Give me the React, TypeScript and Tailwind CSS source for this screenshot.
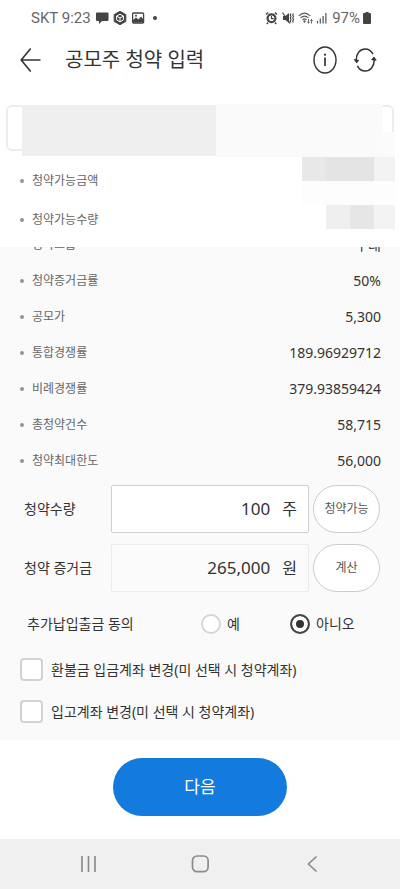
import { useState } from 'react';

type Item = { label: string; value?: string };

const availableItems: Item[] = [{ label: '청약가능금액' }, { label: '청약가능수량' }];

const offerItems: Item[] = [
  { label: '청약그룹', value: '우대' },
  { label: '청약증거금률', value: '50%' },
  { label: '공모가', value: '5,300' },
  { label: '통합경쟁률', value: '189.96929712' },
  { label: '비례경쟁률', value: '379.93859424' },
  { label: '총청약건수', value: '58,715' },
  { label: '청약최대한도', value: '56,000' },
];

function StatusBar() {
  return (
    <div className="flex h-9 items-center justify-between pr-7 pl-[31px] font-['Roboto',sans-serif] text-[15px] text-[#666]">
      <div className="flex items-center gap-1">
        <span>SKT 9:23</span>
        <svg width="14" height="14" viewBox="0 0 14 14" fill="#444">
          <path d="M2 1.5h10.500q1 0 1 1v6.500q0 1-1 1H7L4 13V10H2q-1 0-1-1V2.500q0-1 1-1z" />
        </svg>
        <svg width="14" height="14" viewBox="0 0 14 14">
          <path d="M7 .3 12.800 3.600v6.800L7 13.700 1.200 10.400V3.600z" fill="#444" stroke="#444" strokeLinejoin="round" />
          <path d="M7 3.200 10.400 5.100v3.800L7 10.800 3.600 8.900V5.100zM3.600 5.100 7 7l3.400-1.900M7 7v3.800" fill="none" stroke="#fff" strokeWidth="1" />
        </svg>
        <svg width="14" height="14" viewBox="0 0 14 14">
          <rect x="1.600" y="2" width="11" height="10" rx="1" fill="none" stroke="#444" strokeWidth="1.300" />
          <path d="M2 11.500V9l3-2.500 2.500 2 2.500-3 2.500 3v3z" fill="#444" />
          <circle cx="5" cy="4.800" r="1" fill="#444" />
        </svg>
        <span className="ml-1 size-1 rounded-full bg-[#444]" />
      </div>
      <div className="flex items-center gap-[3px]">
        <svg width="13" height="14" viewBox="0 0 13 14" fill="none" stroke="#444">
          <circle cx="6.500" cy="7.300" r="3.900" strokeWidth="2.200" />
          <path d="M6.500 5v2.600h2.200" strokeWidth="1.200" />
          <path d="M1 3.500 3.200 1.500M12 3.500 9.800 1.500M3 11.500 1.800 13M10 11.500 11.200 13" strokeWidth="1.500" />
        </svg>
        <svg width="14" height="14" viewBox="0 0 14 14" fill="none" stroke="#444">
          <path d="M2 5h2.500L8 2v10L4.500 9H2z" fill="#444" stroke="none" />
          <path d="M1.500 1.500 9 12.500" strokeWidth="1.200" />
          <path d="M10 2.500l-.8 1.500.8 1.500-.8 1.500.8 1.500-.8 1.500.8 1.500M12.500 2.500l-.8 1.500.8 1.500-.8 1.500.8 1.500-.8 1.500.8 1.500" strokeWidth="1.100" />
        </svg>
        <svg width="15" height="14" viewBox="0 0 15 14" fill="none" stroke="#555" strokeWidth="1.100">
          <path d="M.8 4.800Q6.500-.6 12.200 4.800M2.600 6.900Q6.500 3.200 10.400 6.900M4.500 8.900Q6.500 7 8.500 8.900" />
          <circle cx="6.500" cy="10.500" r=".6" fill="#555" />
          <path d="M10.500 8v4M9.300 11l1.200 1.200L11.700 11M13.500 12.500v-4M12.300 9.700l1.200-1.200 1.200 1.200" strokeWidth=".9" />
        </svg>
        <svg width="13" height="14" viewBox="0 0 13 14" stroke="#555" strokeWidth="1.200">
          <path d="M1.500 12.500v-2.500M4.300 12.500V7.500M7.100 12.500V5M9.900 12.500V2" />
        </svg>
        <div className="flex items-center gap-[2px]">
          <span>97%</span>
          <svg width="10" height="14" viewBox="0 0 10 14" fill="#444">
            <path d="M3.500 1h3v1H8q1 0 1 1v9q0 1-1 1H2q-1 0-1-1V3q0-1 1-1h1.500z" />
          </svg>
        </div>
      </div>
    </div>
  );
}

function Header() {
  return (
    <header className="flex h-12 items-center pr-[23px] pl-5">
      <button type="button" aria-label="뒤로">
        <svg width="21" height="26" viewBox="0 0 21 26" fill="none" stroke="#333" strokeWidth="1.600">
          <path d="M10.700 1.600 1.200 13l9.500 11.400M1.200 13H20.500" />
        </svg>
      </button>
      <h1 className="ml-6 flex-1 text-xl text-[#333]">공모주 청약 입력</h1>
      <div className="flex items-center gap-4">
        <button type="button" aria-label="안내">
          <svg width="24" height="28" viewBox="0 0 24 28" fill="none" stroke="#333" strokeWidth="1.400">
            <ellipse cx="12" cy="14" rx="11" ry="13" />
            <path d="M12 11.500v8.500" strokeWidth="1.700" />
            <circle cx="12" cy="8.700" r="1.100" fill="#333" stroke="none" />
          </svg>
        </button>
        <button type="button" aria-label="새로고침">
          <svg width="24" height="28" viewBox="0 0 24 28" fill="none" stroke="#333" strokeWidth="1.500">
            <path d="M3.200 14C3.200 7.500 7.200 3 12.200 3c3.300 0 6.200 2 7.800 5.200M21.200 14c0 6.500-4 11-9 11-3.400 0-6.200-2-7.800-5.200" />
            <path d="M1.200 13.500 5.600 14.300 3.800 17zM18.600 13.700 23.200 14.300 21 11z" fill="#333" strokeWidth=".8" />
          </svg>
        </button>
      </div>
    </header>
  );
}

// Hides the account number and the available amounts
function PrivacyMask() {
  return (
    <div aria-hidden="true" className="absolute top-5 right-[5px] left-[22px] flex flex-col">
      <div className="flex h-[53px]">
        <div className="mt-px mb-px w-[194px] bg-[#efefef]" />
        <div className="flex-1 bg-[#fafafa]" />
        <div className="mt-7 w-3 bg-[#fbfbfb]" />
      </div>
      <div className="flex h-6 justify-end">
        <div className="w-6 bg-[#e8e8e8]" />
        <div className="w-12 bg-[#e4e4e4]" />
        <div className="w-[21px] bg-[#f3f3f3]" />
      </div>
      <div className="h-6 w-[93px] self-end bg-[#fdfdfd]" />
      <div className="flex h-6 justify-end">
        <div className="w-6 bg-[#efefef]" />
        <div className="w-6 bg-[#e6e6e6]" />
        <div className="w-[21px] bg-[#f3f3f3]" />
      </div>
    </div>
  );
}

function InfoRow({ label, value }: Item) {
  return (
    <>
      <span className="size-1 rounded-full bg-[#8f959d]" />
      <span className="ml-2 flex-1 text-xs text-[#666]">{label}</span>
      {value && <span className="text-sm text-[#333]">{value}</span>}
    </>
  );
}

function App() {
  const [quantity, setQuantity] = useState('100');
  const [agree, setAgree] = useState('no');

  const radioClass =
    'size-5 appearance-none rounded-full border-2 border-[#d5d5d5] bg-white checked:border-[#444] checked:bg-[#333] checked:shadow-[inset_0_0_0_4px_#fff]';
  const checkClass =
    'size-[23px] appearance-none rounded border-2 border-[#d2d2d2] bg-white checked:bg-[#127bdd]';
  const roundButtonClass =
    'h-12 w-[67px] rounded-3xl border border-[#ccc] bg-white text-xs text-[#555]';

  return (
    <div className="flex min-h-screen flex-col bg-white font-['Noto_Sans','Noto_Sans_CJK_KR',sans-serif] text-[#333]">
      <StatusBar />
      <Header />

      <section className="relative pt-[21px] pb-2">
        <div className="mx-[6px] h-[46px] rounded-md border-2 border-[#ececec]" />
        <ul className="mt-[10px]">
          {availableItems.map((item) => (
            <li key={item.label} className="flex h-[39px] items-center pr-[19px] pl-5">
              <InfoRow {...item} />
            </li>
          ))}
        </ul>
        <PrivacyMask />
      </section>

      <main className="flex-1 overflow-hidden bg-[#fafafa] pb-[17px]">
        {/* list is scrolled a little under the fixed block above */}
        <ul className="-mt-5">
          {offerItems.map((item) => (
            <li key={item.label} className="flex h-9 items-center pr-[19px] pl-5">
              <InfoRow {...item} />
            </li>
          ))}
        </ul>

        <div className="flex flex-col gap-[11px] pt-[6px] pr-5 pl-6">
          <div className="flex items-center">
            <label htmlFor="quantity" className="w-[87px] text-sm">
              청약수량
            </label>
            <div className="flex h-12 min-w-0 flex-1 items-center rounded-xs border border-[#cfd0d5] bg-white pr-[11px]">
              <input
                id="quantity"
                type="text"
                inputMode="numeric"
                value={quantity}
                onChange={(e) => setQuantity(e.target.value)}
                className="min-w-0 flex-1 bg-transparent text-right text-[17px] outline-none"
              />
              <span className="ml-3 text-base">주</span>
            </div>
            <button type="button" className={`ml-1 ${roundButtonClass}`}>
              청약가능
            </button>
          </div>
          <div className="flex items-center">
            <label htmlFor="deposit" className="w-[87px] text-sm">
              청약 증거금
            </label>
            <div className="flex h-12 min-w-0 flex-1 items-center rounded-xs border border-[#ebebeb] bg-[#fbfbfb] pr-[11px]">
              <input
                id="deposit"
                type="text"
                readOnly
                value="265,000"
                className="min-w-0 flex-1 bg-transparent text-right text-[17px] outline-none"
              />
              <span className="ml-3 text-base">원</span>
            </div>
            <button type="button" className={`ml-1 ${roundButtonClass}`}>
              계산
            </button>
          </div>
        </div>

        <div
          role="radiogroup"
          aria-labelledby="agree-label"
          className="mt-5 flex h-6 items-center pl-[27px] text-sm"
        >
          <span id="agree-label" className="w-[174px]">
            추가납입출금 동의
          </span>
          <label className="flex w-[89px] items-center gap-[6px]">
            <input
              type="radio"
              name="agree"
              checked={agree === 'yes'}
              onChange={() => setAgree('yes')}
              className={radioClass}
            />
            예
          </label>
          <label className="flex items-center gap-[6px]">
            <input
              type="radio"
              name="agree"
              checked={agree === 'no'}
              onChange={() => setAgree('no')}
              className={radioClass}
            />
            아니오
          </label>
        </div>

        <div className="mt-[22px] flex flex-col gap-[19px] pl-5 text-sm">
          <label className="flex h-[23px] items-center gap-2">
            <input type="checkbox" className={checkClass} />
            환불금 입금계좌 변경(미 선택 시 청약계좌)
          </label>
          <label className="flex h-[23px] items-center gap-2">
            <input type="checkbox" className={checkClass} />
            입고계좌 변경(미 선택 시 청약계좌)
          </label>
        </div>
      </main>

      <div className="flex justify-center pt-[18px] pb-[23px]">
        <button type="button" className="h-[58px] w-[174px] rounded-full bg-[#127bdd] text-[17px] text-white">
          다음
        </button>
      </div>

      <nav className="flex h-[50px] items-center justify-between bg-[#f0f0f0] px-[77px]">
        <button type="button" aria-label="최근 앱">
          <svg width="24" height="20" viewBox="0 0 24 20" stroke="#8c8c8c" strokeWidth="1.700">
            <path d="M5 2v16M11.500 2v16M18 2v16" />
          </svg>
        </button>
        <button type="button" aria-label="홈">
          <svg width="20" height="20" viewBox="0 0 20 20" fill="none" stroke="#8c8c8c" strokeWidth="1.700">
            <rect x="2.500" y="2" width="15.600" height="15.600" rx="4.500" />
          </svg>
        </button>
        <button type="button" aria-label="뒤로 가기">
          <svg width="24" height="20" viewBox="0 0 24 20" fill="none" stroke="#8c8c8c" strokeWidth="1.700">
            <path d="M17.500 2.500 9.500 10l8 7.500" />
          </svg>
        </button>
      </nav>
    </div>
  );
}

export default App;
